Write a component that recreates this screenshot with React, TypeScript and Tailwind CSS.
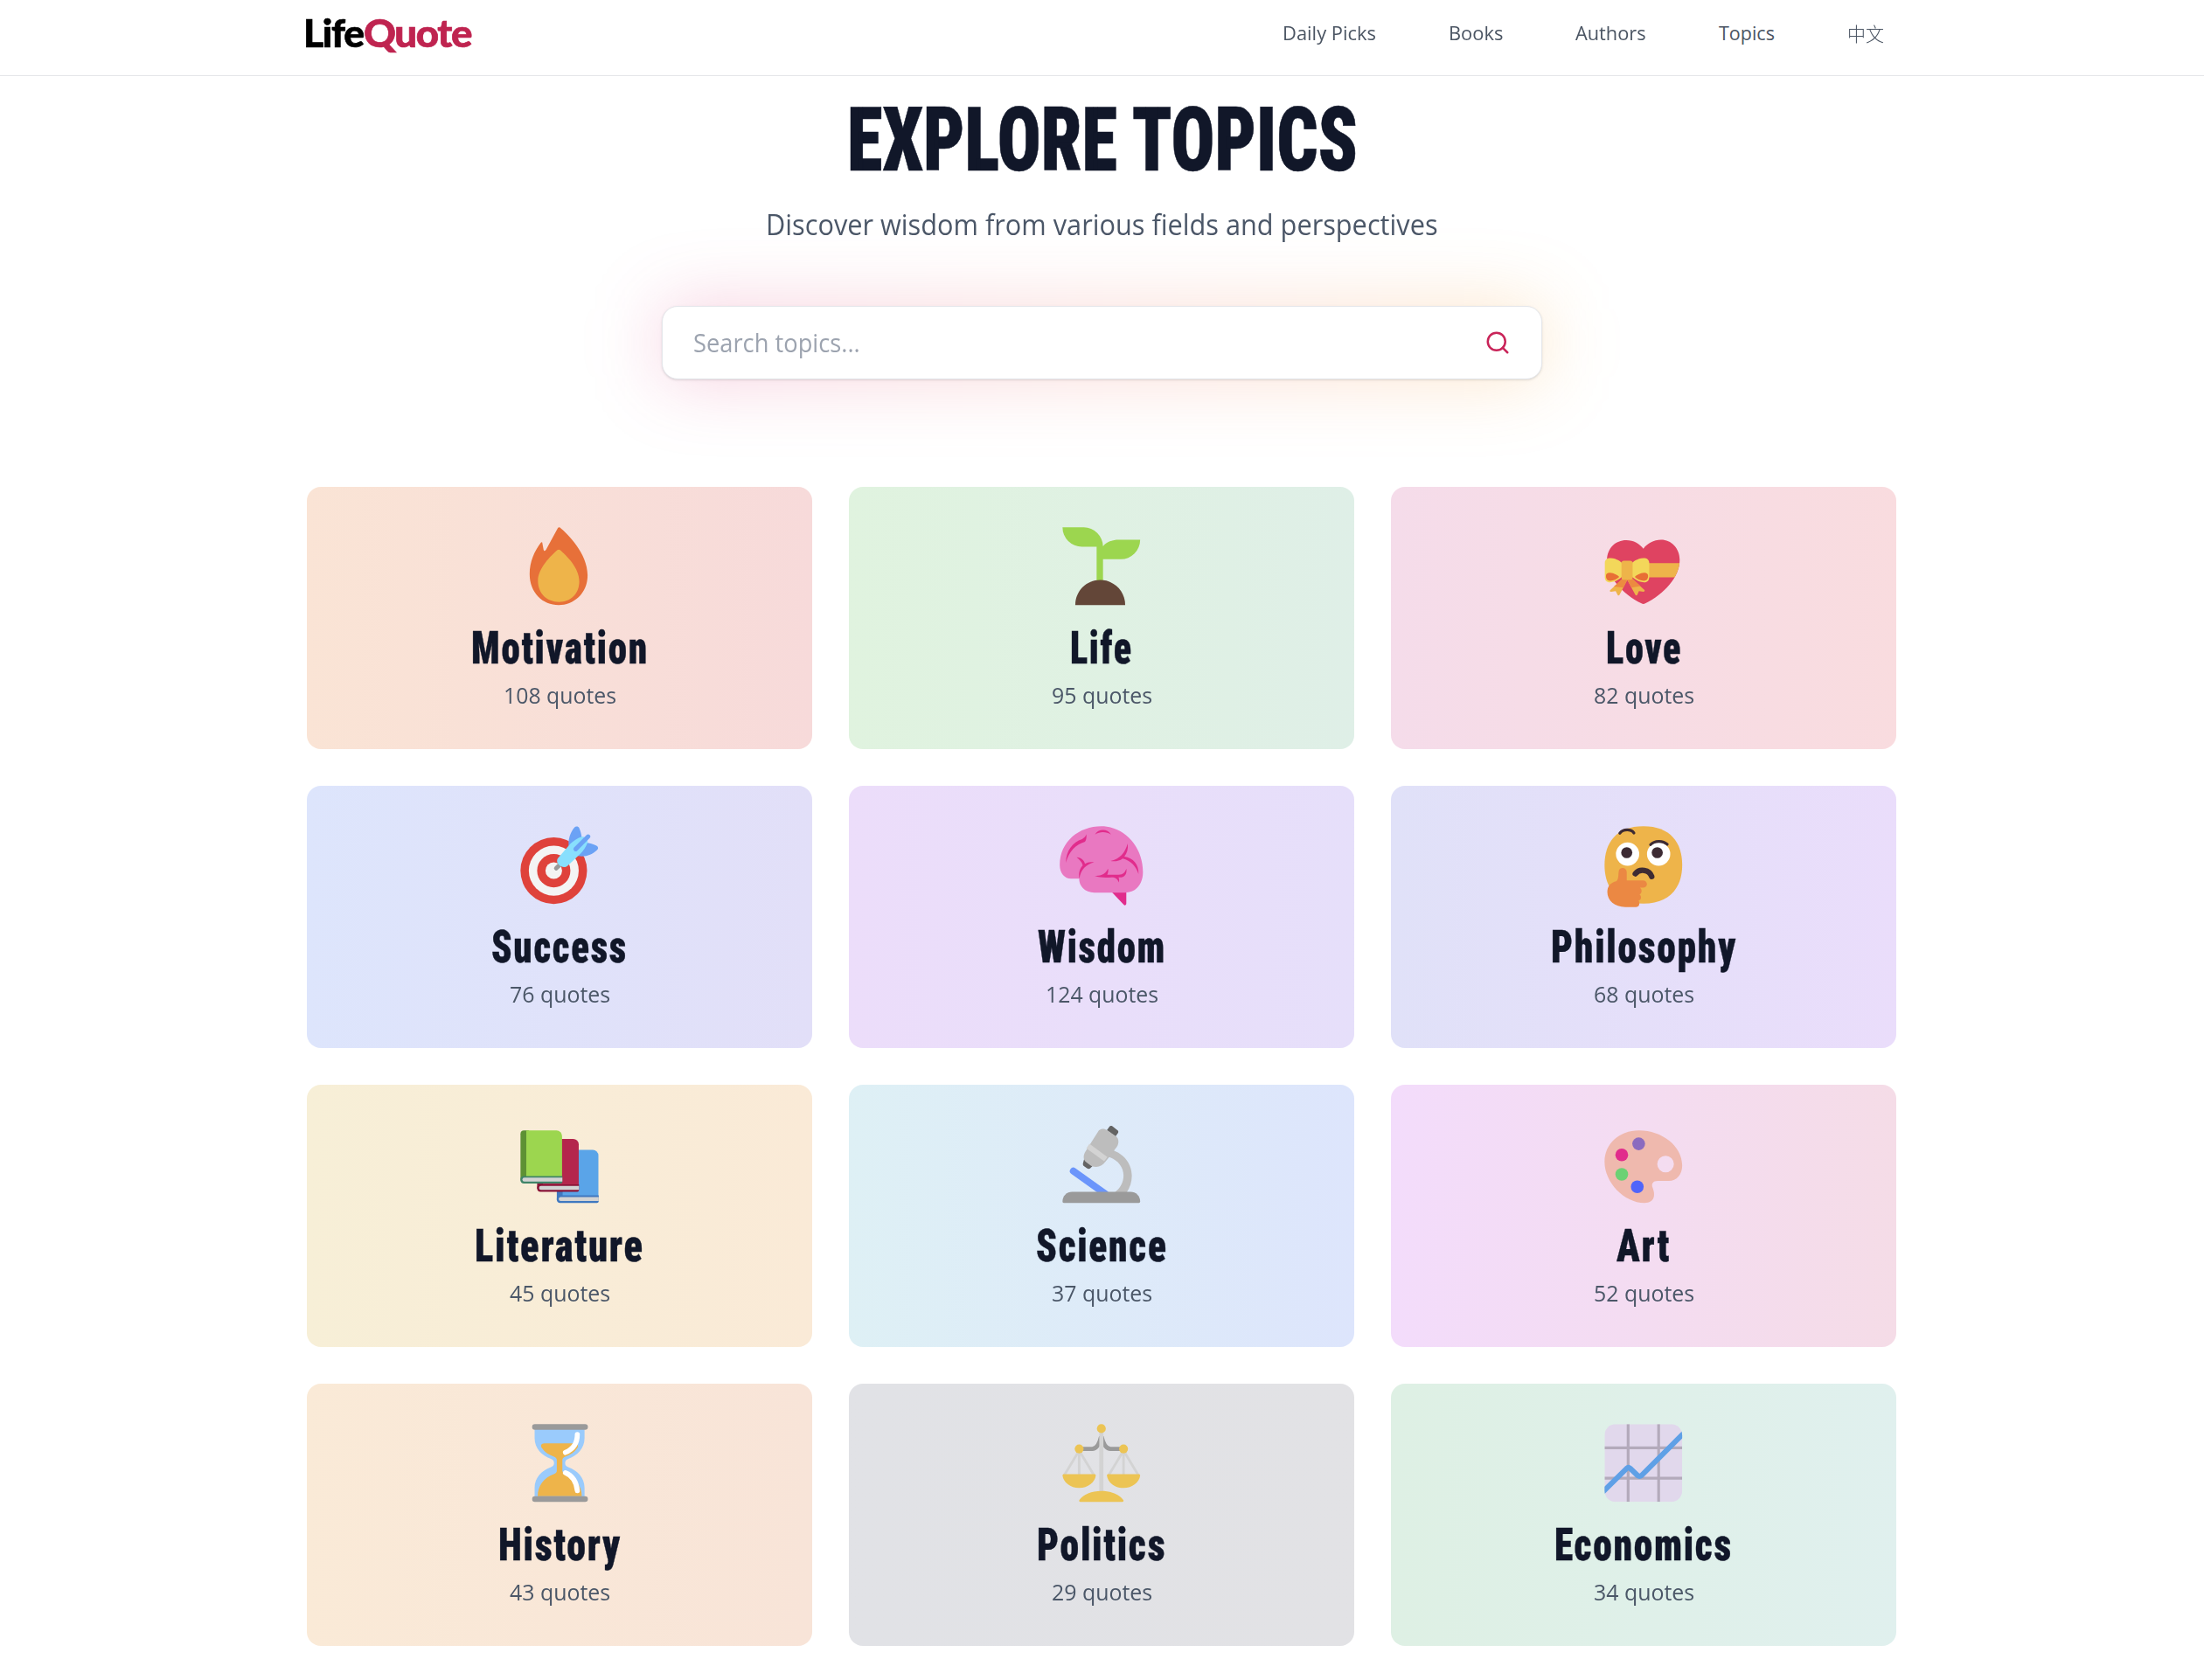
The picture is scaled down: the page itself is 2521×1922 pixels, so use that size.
import { useLayoutEffect, useRef, useState } from "react";
import type { ReactNode } from "react";
import { Search } from "lucide-react";

/* Text set to an exact width, condensed or widened horizontally. */
function FitText({ width, children, className = "" }: { width: number; children: ReactNode; className?: string }) {
  const ref = useRef<HTMLSpanElement>(null);
  const [scale, setScale] = useState(1);
  useLayoutEffect(() => {
    if (ref.current) setScale(width / ref.current.offsetWidth);
  }, [width]);
  return (
    <span className={`block ${className}`} style={{ width }}>
      <span ref={ref} className="inline-block origin-left whitespace-nowrap" style={{ transform: `scaleX(${scale})` }}>
        {children}
      </span>
    </span>
  );
}

const Fire = () => (
  <>
    <path fill="#e77039" d="M16.3 2.1C19 4.3 26.2 11.4 26.2 19.2 26.2 26 21 30 15.8 30 10 30 5.3 25.5 5.3 18.8c0-4.3 1.7-8.2 4-11.2.3-.4.6-.3.6.1l.4 2.2c.1.7.6.7.9.2l4.2-7.7c.2-.4.6-.5.9-.3Z" />
    <path fill="#eeb44a" d="M15.3 10.2c.3-.3.7-.3 1 0 2.2 2 6.9 6.3 6.9 11.3 0 4.5-3.2 7.4-7.3 7.4-4.4 0-7.6-3.1-7.6-7.6 0-4.5 4.7-9.1 7-11.1Z" />
  </>
);

const Seedling = () => (
  <>
    <path fill="#9cd64f" d="M2 2h7.7a7 7 0 0 1 6.9 6.8c1.1-1.4 3.2-2.3 5.6-2.3H30a7 7 0 0 1-7 7h-6.4V22h-2.3V9H9a7 7 0 0 1-7-7Z" />
    <path fill="#634638" d="M6.6 30c0-5 4-9 9-9s9 4 9 9Z" />
  </>
);

const GiftHeart = () => (
  <>
    <clipPath id="heart">
      <path d="M16 9.7c-1.3-1.8-3.5-3.1-6.2-3.1-3.8 0-6.9 2.9-6.9 7.1 0 6.3 5.6 12.3 12.4 15.7q.7.4 1.4 0C23.5 26 29.1 20 29.1 13.7c0-4.2-3.1-7.2-6.7-7.2-2.7 0-5.1 1.4-6.4 3.2Z" />
    </clipPath>
    <g clipPath="url(#heart)">
      <path fill="#df4361" d="M0 0h32v32H0z" />
      <path fill="#eeb44a" d="M10 14.9h20V20H10z" />
    </g>
    <path fill="#eeb44a" d="M8.5 20.5 4 24.7c-.2.3 0 .6.4.5l1.6-.2.7 1.3c.2.4.6.3.7 0L10.2 21l2.9 5.3c.2.3.6.3.7 0l.6-1.3 1.6.2c.4 0 .6-.3.4-.6l-4.4-4Z" />
    <path fill="#ec8b40" d="M8.5 20.5 5.4 23.3l3.4.4 1.4-2.9 1.5 2.9 3.3-.5-2.9-2.7Z" />
    <path fill="#f3d75a" d="M3.6 13.1c2.4-.4 4.6 1.6 4.6 1.6v5.2s-2.2 2.2-4.7 1.9c-.8-.1-1.4-.8-1.4-1.7v-5.4c0-.8.7-1.5 1.5-1.6ZM16.6 13.1c-2.4-.4-4.6 1.6-4.6 1.6v5.2s2.2 2.2 4.7 1.9c.8-.1 1.4-.8 1.4-1.7v-5.4c0-.8-.7-1.5-1.5-1.6Z" />
    <path fill="#e86f35" d="M2.5 19.5c0-.7.6-1.2 1.5-1.1 1.4.1 2.6.8 3.3 1.5-.8.8-2.1 1.4-3.3 1.4-1 0-1.5-.7-1.5-1.8ZM17.7 19.5c0-.7-.6-1.2-1.5-1.1-1.4.1-2.6.8-3.3 1.5.8.8 2.1 1.4 3.3 1.4 1 0 1.5-.7 1.5-1.8Z" />
    <rect x="8.1" y="14" width="4" height="6.9" rx=".9" fill="#eeb44a" />
  </>
);

const Target = () => (
  <>
    <circle cx="14" cy="18" r="12" fill="#df423b" />
    <circle cx="14" cy="18" r="9" fill="#f4f4f4" />
    <circle cx="14" cy="18" r="6" fill="#df423b" />
    <circle cx="14" cy="18" r="3" fill="#f4f4f4" />
    <path stroke="#9a9a9a" strokeWidth="1.6" strokeLinecap="round" d="m14.9 17.1 1.8-1.7" />
    <path fill="#6ba2f5" d="M19.5 9.8c-.6-2.8.6-5.9 2-7.4.5-.5 1.4-.4 1.7.3.5 1.1.8 2.4.9 3.6l1.6 1.6c1.3.1 2.5.5 3.7 1.1.7.4.8 1.1.2 1.6-1.8 1.8-4.3 2.6-7 2.1Z" />
    <path fill="#88dffd" d="M15.4 13.6 20 8.3c1-1 2.6-2.1 3.9-2.5.7-.2 1.2 0 1.5.4l.5.4c.3.4.5.9.2 1.5-.5 1.2-1.4 2.7-2.5 3.8L19 16.2c-1 .8-2.2.5-3-.2-.9-.8-1-1.7-.6-2.4Z" />
    <path stroke="#6ba2f5" strokeWidth="1.6" strokeLinecap="round" d="m21.9 10.2 4.5-4.5" />
  </>
);

const Brain = () => (
  <>
    <path fill="#e12c8c" d="M19.6 25.5H25V29.8c0 .7-.6.9-1 .4Z" />
    <path fill="#e978c1" d="M16 2C8 2 1 7.5 1 16c0 2.9 1.8 4.9 4.1 4.9H8c0 2.9 2.3 5 5.5 5H24.5c4.3 0 6.5-3.4 6.5-7.4C31 9.5 24.5 2 16 2Z" />
    <g fill="#e12c8c">
      <path d="M3.2 15.1c.1-4.3 2.4-7.4 5.9-8.5.7-.4 1.2-.9 1.5-1.7.1 1.1 0 2-.5 2.7C6.7 8.6 4.4 11 3.2 15.1Z" />
      <path d="M13.7 5c1.1-2.2 4.6-2.3 5.8 0-1.7-1.1-4-1.2-5.8 0Z" />
      <path d="M19.3 14.5c3.3-.7 5.3-2.9 6.2-6.3.2 2-.2 3.5-1.2 4.7 3.2.5 5.3 2.8 5.1 6.3-.9-2.9-2.8-4.9-5.7-5.6-1.2.9-2.7 1.1-4.4.9Z" />
      <path d="M7.1 13.2c1.7.2 2.7 1.1 3 2.3.9-.6 2-.8 3.3-.5-2.9.8-4.8 2.6-5.3 5.8-.4-1.9.1-3.5 1.2-4.7-.3-1.2-1.2-2-2.2-2.9Z" />
      <path d="M13.6 19.9c1.6 0 3.8-.2 4.8-2.6.2.9 0 1.6-.3 2.2h4.2c1.6 0 2.3-.9 2.7-2.2.3 1.5-.4 3.1-1.9 3.1h-.9c.2.5.3 1.1.1 1.8-.3-.9-.9-1.6-2-1.8-2.3.1-4.5.3-6.7-.5Z" />
    </g>
  </>
);

const Thinking = () => (
  <>
    <path fill="#eeb44a" d="M16 2c9.800 0 14 6 14 14S25.500 29.900 16 29.900C6.200 29.900 2 24 2 16S6.200 2 16 2Z" />
    <circle cx="10.3" cy="12" r="4.2" fill="#fff" />
    <circle cx="21.5" cy="12" r="4.2" fill="#fff" />
    <circle cx="10" cy="11.500" r="2" fill="#3d2b33" />
    <circle cx="21" cy="11.500" r="2" fill="#3d2b33" />
    <g fill="none" stroke="#3d2b33" strokeLinecap="round">
      <path strokeWidth="1" d="M7.5 4.500c1.200-1.600 4-1.600 5.100-.1M18.600 8.600c1.400-1.500 4.400-1.600 6-.1" />
      <path strokeWidth="2" d="M13.100 19.100c1.500-2 5.100-1.500 5.900 1" />
    </g>
    <path fill="#eb8843" d="M8.5 17c.9 0 1.5.7 1.5 1.6v2.9h5.7c2.1 0 2.1 2.6.1 2.6h-1c.9.8.6 2.2-.2 2.5.9.7.6 2-.3 2.2.5.9.3 2.300-.9 2.300H9.500C5.600 31.100 3 28.800 3 25.700c0-2 1-3.400 3.200-3.900.6-.4.7-1.200.8-2.100.1-1.400 0-2.700 1.500-2.700Z" />
  </>
);

function Book({ x, y, cover, dark, band }: { x: number; y: number; cover: string; dark: string; band: string }) {
  return (
    <g transform={`translate(${x} ${y})`}>
      <path fill={dark} d="M1.2 0H3v18H0V1.2C0 .5.5 0 1.2 0Z" />
      <path fill={cover} d="M2.1 0H13a2 2 0 0 1 2 2v15H2.1Z" />
      <path fill={band} d="M0 17.5c0-.7.5-1.1 1.2-1.1H15.1V18.5c0 .4-.3.6-.6.6H1.2C.5 19.100 0 18.600 0 18Z" />
      <path fill="#d3d3d3" d="M1.4 17h13.7v1.4H1.4a.7.7 0 0 1 0-1.4Z" />
    </g>
  );
}

const Books = () => (
  <>
    <Book x={15.1} y={10.9} cover="#5aa4e8" dark="#3f78c0" band="#3f78c0" />
    <Book x={8} y={6.9} cover="#b4264c" dark="#8a1538" band="#8a1538" />
    <Book x={2} y={3.9} cover="#9cd64f" dark="#5d9134" band="#3f8468" />
  </>
);

const Microscope = () => (
  <>
    <path fill="#bdbdbd" d="m19.7 10.9-1.6 2.4c3.5.8 5.9 3.6 5.9 6.8 0 2.5-1.2 4.7-3.3 6.2h4.4c1.2-1.7 1.9-3.8 1.9-6.1 0-4.3-2.9-8-7.3-9.3Z" />
    <path stroke="#6b95fb" strokeWidth="2.5" strokeLinecap="round" d="m5.900 18.500 11.500 8.200" />
    <path fill="#636363" d="M18 3.8 18.9 2.5c.3-.4.6-.4 1-.2l1.9 1.5c.4.3.4.6.2 1l-.9 1.3ZM9.8 14.2l-.4 1.5c-.1.4 0 .8.4 1.1l1 .7c.5.4 1 .2 1.3-.1l1-1Z" />
    <path fill="#bdbdbd" d="M15.1 3.9c.9-.8 2-.8 3-.1l3.1 2.1c1 .7 1.2 2.1.7 3.3-.5 1-1.2 1.600-1.700 2.600L17.6 15c-1.300 2-3.400 2.500-5.300 1.600L10.6 15.400c-1.200-.9-1.200-2.400-.4-3.800Z" />
    <path fill="#d3d3d3" d="m11.700 8.700 6.500 4.800-1.200 1.500-6.400-4.700Z" />
    <path fill="#9a9a9a" d="M5.5 26h21c2 0 3.5 1.5 3.5 3.5 0 .3-.2.5-.5.5h-27c-.3 0-.5-.2-.5-.5C2 27.5 3.5 26 5.5 26Z" />
  </>
);

const Palette = () => (
  <>
    <path fill="#efb9ae" fillRule="evenodd" d="M14.4 3.9C22.8 3.9 30 9.6 30 16.5c0 3.3-2 5.6-4.8 5.6h-4c-1.7 0-2.5 1-1.8 2.6.9 2.4.8 5.300-3 5.300C9 30 2 22.500 2 15.200 2 8.700 7.300 3.900 14.400 3.900ZM24 13a3 3 0 1 0 0 6 3 3 0 0 0 0-6Z" />
    <circle cx="14.3" cy="8.7" r="2.3" fill="#8b6bbf" />
    <circle cx="8.2" cy="12.700" r="2.3" fill="#e12c8c" />
    <circle cx="8.2" cy="19.700" r="2.3" fill="#6cd174" />
    <circle cx="13.8" cy="24.200" r="2.3" fill="#5065fa" />
  </>
);

const Hourglass = () => (
  <>
    <path fill="#9acbfc" d="M7.1 3.5V7c0 3.8 2.7 6.3 5.7 7.4 1 .4 1.3.8 1.3 1.6s-.3 1.2-1.3 1.6c-3 1.1-5.7 3.6-5.7 7.4v3.500h18V25c0-3.800-2.700-6.300-5.700-7.400-1-.4-1.300-.8-1.300-1.600s.3-1.200 1.300-1.600c3-1.100 5.700-3.600 5.700-7.400V3.500Z" />
    <path fill="#eeb44a" d="M10.6 8.9h11c1.2 0 1.400.9.9 1.700-1.100 1.600-2.600 2.600-4.400 3.100-.7.3-1 .7-1 1.300v3.700c0 .7.4 1 1.100 1.300 3.700 1.300 5.900 4.300 5.900 8H8.200c0-3.700 2.200-6.700 5.800-8 .8-.3 1.100-.6 1.100-1.300V15c0-.6-.3-1-1-1.300-1.800-.5-3.300-1.500-4.400-3.100-.5-.8-.3-1.700.9-1.700Z" />
    <path fill="none" stroke="#fff" strokeWidth="1.800" strokeLinecap="round" d="M22.5 5.700c0 3.100-1.600 5.400-4.300 6.500M18.200 19.500c2.400 1 4 3.200 4.300 6.500" />
    <rect x="6.2" y="2" width="20.100" height="2" rx="1" fill="#9a9a9a" />
    <rect x="6.2" y="28" width="20.100" height="2" rx="1" fill="#9a9a9a" />
  </>
);

const Scales = () => (
  <>
    <path fill="none" stroke="#9a9a9a" strokeWidth="1.5" d="M15.9 6.500c-.7 3-1.600 4.400-3.200 4.400H8M16.100 6.500c.7 3 1.600 4.400 3.200 4.400H24" />
    <g fill="none" stroke="#d3d3d3">
      <path strokeWidth=".9" d="M8 11v9.500M24 11v9.500M8 11.500 2.600 20.500M8 11.500l5.400 9M24 11.500l-5.400 9M24 11.500l5.400 9" />
      <path strokeWidth="1.5" d="M16 4v23" />
    </g>
    <g fill="#ecc454">
      <circle cx="16" cy="3.6" r="1.6" />
      <circle cx="8" cy="10.9" r="1.6" />
      <circle cx="24" cy="10.9" r="1.6" />
      <path d="M2.5 20h11c.3 0 .5.2.5.5C13.700 23 11.200 25 8 25s-5.700-2-6-4.500c0-.3.2-.5.5-.5ZM18.500 20h11c.3 0 .5.2.5.5-.3 2.500-2.800 4.500-6 4.500s-5.700-2-6-4.500c0-.3.2-.5.5-.5ZM16 26.100c3.500 0 6.500 1.300 7.900 3.200.2.3.1.7-.3.7H8.400c-.4 0-.5-.4-.3-.7 1.400-1.900 4.400-3.200 7.900-3.200Z" />
    </g>
  </>
);

const Chart = () => (
  <>
    <clipPath id="sheet">
      <rect x="2" y="2" width="28" height="28" rx="4" />
    </clipPath>
    <g clipPath="url(#sheet)" fill="none">
      <path fill="#e1d8ec" d="M2 2h28v28H2z" />
      <path stroke="#b3aabb" strokeWidth="1" d="M10.500 2v28M21.500 2v28M2 10.500h28M2 21.500h28" />
      <path stroke="#5fa0e6" strokeWidth="1.9" strokeLinejoin="round" d="m1 26.800 9-8.900q.6-.5 1.200 0l2.700 2.600q.7.5 1.400 0L31 4.800" />
    </g>
  </>
);

type Topic = { name: string; count: string; w: number; cw: number; tone: string; icon: () => ReactNode };

const topics: Topic[] = [
  { name: "Motivation", count: "108 quotes", w: 203, cw: 129, tone: "from-[#fae4d5] to-[#f7dada]", icon: Fire },
  { name: "Life", count: "95 quotes", w: 72, cw: 115, tone: "from-[#e0f3df] to-[#dfefe7]", icon: Seedling },
  { name: "Love", count: "82 quotes", w: 87, cw: 115, tone: "from-[#f5dcea] to-[#f9dcdf]", icon: GiftHeart },
  { name: "Success", count: "76 quotes", w: 156, cw: 115, tone: "from-[#dde5fc] to-[#e2dff8]", icon: Target },
  { name: "Wisdom", count: "124 quotes", w: 147, cw: 129, tone: "from-[#ecddfa] to-[#e6dffa]", icon: Brain },
  { name: "Philosophy", count: "68 quotes", w: 213, cw: 115, tone: "from-[#e0e1f8] to-[#eaddfb]", icon: Thinking },
  { name: "Literature", count: "45 quotes", w: 194, cw: 115, tone: "from-[#f7efd7] to-[#faead7]", icon: Books },
  { name: "Science", count: "37 quotes", w: 151, cw: 115, tone: "from-[#def0f5] to-[#dde5fc]", icon: Microscope },
  { name: "Art", count: "52 quotes", w: 62, cw: 115, tone: "from-[#f3dcfb] to-[#f5dce7]", icon: Palette },
  { name: "History", count: "43 quotes", w: 141, cw: 115, tone: "from-[#faead7] to-[#f8e4d8]", icon: Hourglass },
  { name: "Politics", count: "29 quotes", w: 148, cw: 115, tone: "from-[#e1e2e6] to-[#e2e2e5]", icon: Scales },
  { name: "Economics", count: "34 quotes", w: 204, cw: 115, tone: "from-[#def0e4] to-[#e0f0ee]", icon: Chart },
];

const display = "font-['Roboto'] font-black [font-stretch:75%] text-[#111729]";

function Card({ topic }: { topic: Topic }) {
  const Icon = topic.icon;
  return (
    <article className={`flex h-[300px] flex-col items-center rounded-2xl bg-linear-to-r pt-[39.5px] ${topic.tone}`}>
      <svg viewBox="0 0 32 32" className="size-[101.5px] shrink-0">
        <Icon />
      </svg>
      <h2 className={`mt-[14px] text-[52px] leading-[60px] tracking-[0.04em] [-webkit-text-stroke:0.4px] ${display}`}>
        <FitText width={topic.w}>{topic.name}</FitText>
      </h2>
      <p className="mt-[5px] text-[26px] leading-[36px] text-[#4b5768]">
        <FitText width={topic.cw}>{topic.count}</FitText>
      </p>
    </article>
  );
}

export default function App() {
  return (
    <div className="h-[1922px] w-[2521px] overflow-hidden bg-white font-['Open_Sans','Noto_Sans_CJK_SC',sans-serif]">
      <header className="h-[87px] border-b border-[#e5e6e9]">
        <div className="ml-[347px] flex h-[76px] w-[1808px] items-center justify-between">
          <a className="flex font-['Lato'] text-[43px] leading-[50px] font-black tracking-[-0.03em] [-webkit-text-stroke:0.7px]">
            <FitText width={69} className="text-black">Life</FitText>
            <FitText width={123} className="text-[#bf2450]">Quote</FitText>
          </a>
          <nav className="flex gap-[83px] text-[21.5px] leading-[30px] text-[#4b5563]">
            <FitText width={107}>Daily Picks</FitText>
            <FitText width={62}>Books</FitText>
            <FitText width={81}>Authors</FitText>
            <FitText width={64}>Topics</FitText>
            <FitText width={42} className="font-['Noto_Sans_CJK_SC'] font-light">中文</FitText>
          </nav>
        </div>
      </header>
      <main className="flex flex-col items-center pt-[23px]">
        <h1 className={`text-[102.5px] leading-[100px] [-webkit-text-stroke:0.6px] ${display}`}>
          <FitText width={584}>EXPLORE TOPICS</FitText>
        </h1>
        <p className="mt-[25px] text-[32px] leading-[44px] text-[#4b5768]">
          <FitText width={769}>Discover wisdom from various fields and perspectives</FitText>
        </p>
        <div className="relative mt-[71px] h-[84px] w-[1007px]">
          <div className="absolute inset-0 rounded-2xl bg-linear-to-r from-[#db2777]/23 to-[#f79a0e]/23 blur-[42px]" />
          <div className="relative flex h-full items-center justify-between rounded-[18px] border border-[#e5e7eb] bg-white pr-[35px] pl-[35px] shadow-sm">
            <span className="text-[29px] leading-[40px] text-[#9ca3af]">
              <FitText width={191}>Search topics...</FitText>
            </span>
            <Search className="size-[30px] text-[#c92459]" strokeWidth={2} />
          </div>
        </div>
        <section className="mt-[123px] mr-px grid w-[1818px] grid-cols-3 gap-[42px]">
          {topics.map((t) => (
            <Card key={t.name} topic={t} />
          ))}
        </section>
      </main>
    </div>
  );
}
